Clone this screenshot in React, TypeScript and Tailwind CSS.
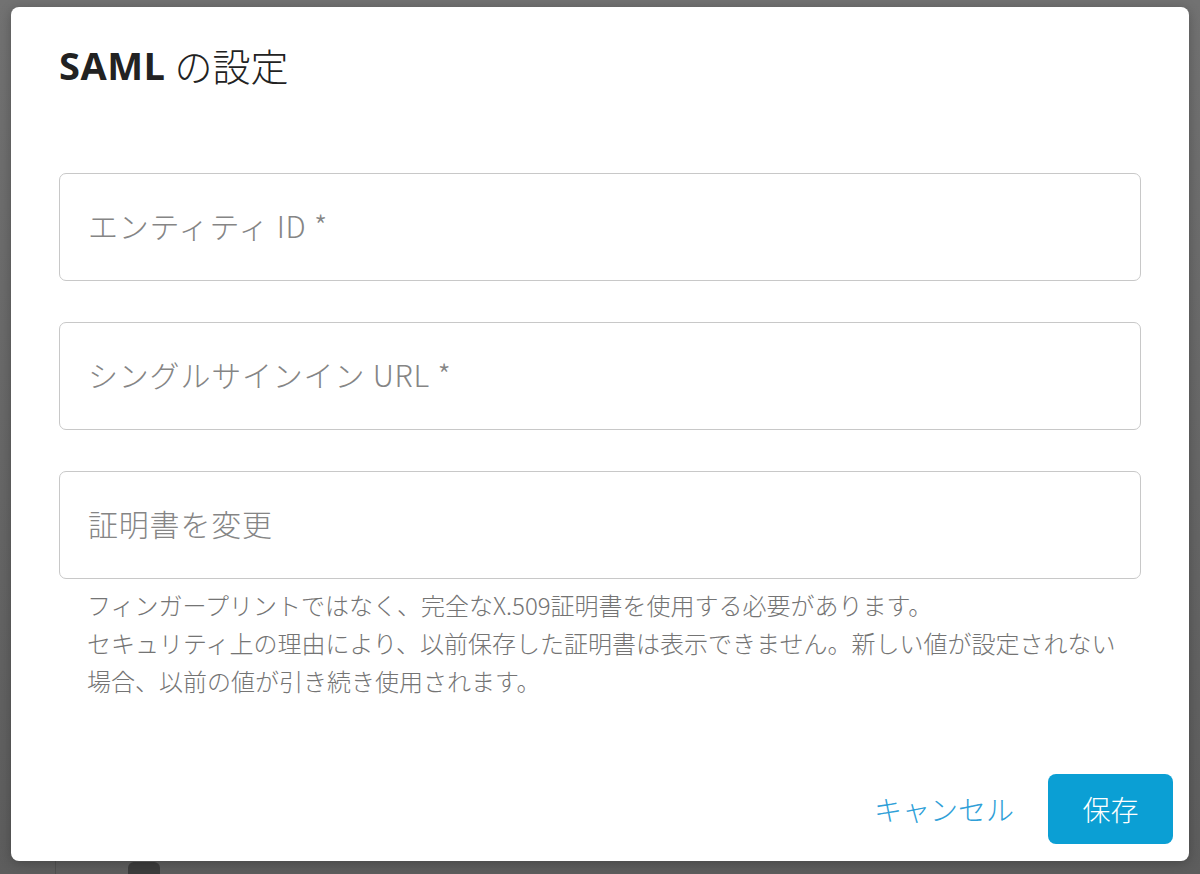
import React from "react";

const fields = ["エンティティ ID *", "シングルサインイン URL *", "証明書を変更"];

export default function App() {
  return (
    <div className="relative h-[874px] w-[1200px] overflow-hidden bg-gradient-to-b from-[#727272] to-[#5d5d5d] font-['Noto_Sans_CJK_JP','Noto_Sans',sans-serif] font-light">
      {/* dimmed page behind the dialog */}
      <div className="absolute bottom-0 left-[55px] h-[14px] w-[1px] bg-[#505050]" />
      <div className="absolute bottom-0 left-[128px] h-[12px] w-[32px] rounded-t-[6px] bg-[#3c3c3c]" />

      <div className="relative ml-[11px] mt-[7px] flex h-[854px] w-[1178px] flex-col rounded-[8px] bg-white shadow-[0_2px_12px_rgba(0,0,0,0.25)]">
        <div className="px-[48px] pt-[34px]">
          <h2 className="flex h-[48px] items-center gap-[9px] text-[38px] leading-none text-[#222]">
            <span className="font-['Open_Sans',sans-serif] font-bold tracking-[0.5px]">SAML</span>
            <span className="font-light">の設定</span>
          </h2>

          <div className="mt-[84px] flex flex-col gap-[41px]">
            {fields.map((f) => (
              <div
                key={f}
                className="flex h-[108px] items-center rounded-[7px] border border-[#c8c8c8] px-[28px] pb-[4px] text-[30px] tracking-[0.8px] text-[#858585]"
              >
                {f}
              </div>
            ))}
          </div>

          <div className="mt-[7px] w-[1026px] pl-[28px] text-[24px] leading-[38px] text-[#747474]">
            <p className="w-[1030px]">フィンガープリントではなく、完全なX.509証明書を使用する必要があります。</p>
            <p className="w-[1030px]">
              セキュリティ上の理由により、以前保存した証明書は表示できません。新しい値が設定されない場合、以前の値が引き続き使用されます。
            </p>
          </div>
        </div>

        <div className="mt-auto flex items-center justify-end gap-[34px] pb-[17px] pr-[16px]">
          <button className="text-[28px] text-[#2f9fd8]">キャンセル</button>
          <button className="h-[70px] w-[125px] rounded-[8px] bg-[#0b9fd4] text-[28px] text-white">保存</button>
        </div>
      </div>
    </div>
  );
}
